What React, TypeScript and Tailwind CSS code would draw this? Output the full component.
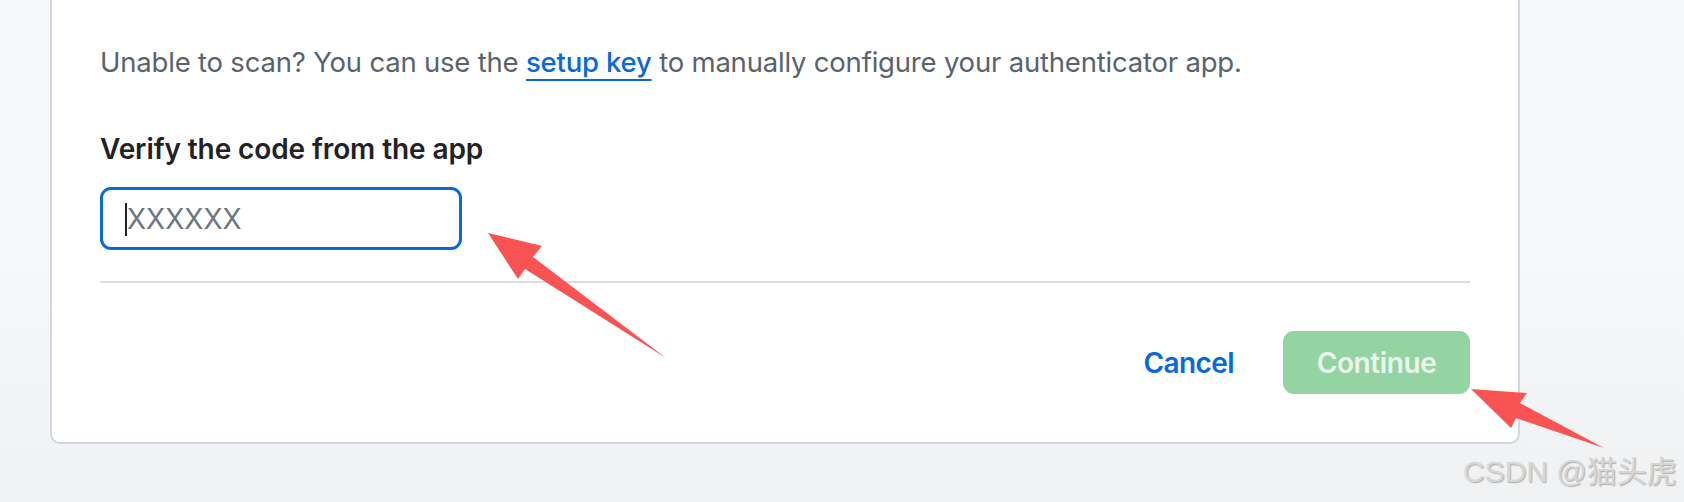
import React from "react";

const Arrows = () => (
  <svg className="pointer-events-none absolute left-0 top-0" width="1684" height="502" viewBox="0 0 1684 502">
    <polygon
      points="488,233 542,246 533,257 666,358 525,269 518,279"
      fill="#fa5353"
    />
    <polygon
      points="1471,389 1527,393 1520,403 1604,448 1516,418 1511,428"
      fill="#fa5353"
    />
  </svg>
);

export default function App() {
  return (
    <div
      className="relative h-[502px] w-[1684px] overflow-hidden bg-gradient-to-b from-[#f6f8fa] via-[#f6f8fa] to-[#eff1f3]"
      style={{ fontFamily: "Inter, 'Noto Sans', sans-serif" }}
    >
      <div className="ml-[50px] h-[444px] w-[1470px] rounded-b-[10px] border-2 border-t-0 border-[#d0d7de] bg-white px-[48px]">
        <p className="pt-[41px] text-[27.5px] leading-[42px] tracking-[-0.2px] text-[#59636e]">
          Unable to scan? You can use the{" "}
          <a href="#" className="font-medium text-[#0969da] underline decoration-2 underline-offset-[7px]">
            setup key
          </a>{" "}
          to manually configure your authenticator app.
        </p>

        <label className="mt-[45px] block text-[28px] font-semibold leading-[42px] tracking-[-0.1px] text-[#1f2328]">
          Verify the code from the app
        </label>

        <div className="relative mt-[17px] w-[362px]">
          <input
            type="text"
            placeholder="XXXXXX"
            className="h-[63px] w-full rounded-[11px] border-[3px] border-[#0969da] bg-white px-[24px] text-[28px] text-[#1f2328] outline-none placeholder:text-[#6e7781]"
          />
          <span className="absolute left-[25px] top-[16px] h-[33px] w-[2px] bg-[#1f2328]" />
        </div>

        <div className="mt-[31px] h-[2px] bg-[#d8dee4]" />

        <div className="mt-[48px] flex items-center justify-end gap-[49px]">
          <button className="text-[28px] font-semibold leading-[42px] tracking-[-0.6px] text-[#0969da]">Cancel</button>
          <button
            disabled
            className="h-[63px] w-[187px] rounded-[11px] bg-[#94d3a2] text-[28px] font-semibold tracking-[-0.4px] text-white/80"
          >
            Continue
          </button>
        </div>
      </div>

      <Arrows />

      <span
        className="absolute left-[1463px] top-[454px] text-[30px] leading-[36px] text-[#d6d6d6]"
        style={{
          fontFamily: "'Liberation Sans', 'Noto Sans CJK SC', sans-serif",
          textShadow: "1px 1px 1px rgba(120,120,120,0.55)",
        }}
      >
        CSDN @猫头虎
      </span>
    </div>
  );
}
